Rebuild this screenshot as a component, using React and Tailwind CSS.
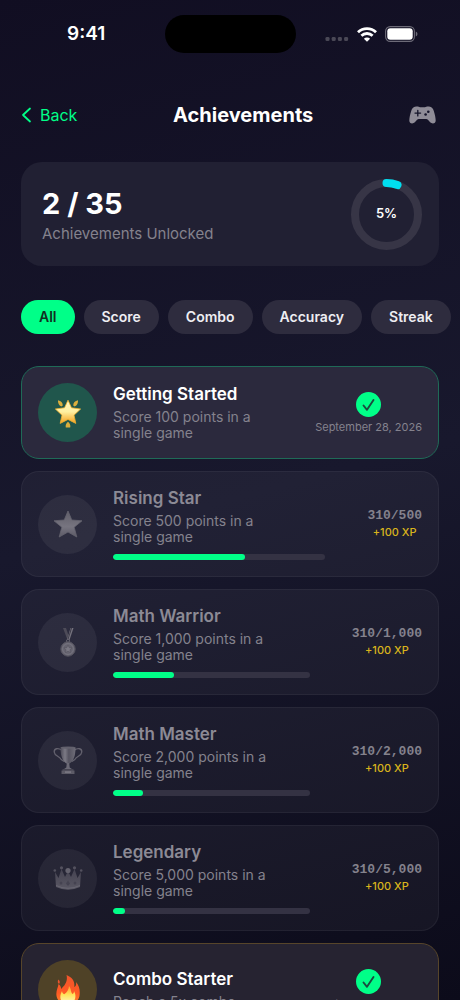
import { useState } from 'react'

const FILTERS = ['All', 'Score', 'Combo', 'Accuracy', 'Streak']

const ACHIEVEMENTS = [
  { id: 1, category: 'Score', title: 'Getting Started', text: 'Score 100 points in a single game', icon: GlowingStar, tone: 'green', date: 'September 28, 2026' },
  { id: 2, category: 'Score', title: 'Rising Star', text: 'Score 500 points in a single game', icon: PlainStar, current: 310, goal: 500 },
  { id: 3, category: 'Score', title: 'Math Warrior', text: 'Score 1,000 points in a single game', icon: Medal, current: 310, goal: 1000 },
  { id: 4, category: 'Score', title: 'Math Master', text: 'Score 2,000 points in a single game', icon: Trophy, current: 310, goal: 2000 },
  { id: 5, category: 'Score', title: 'Legendary', text: 'Score 5,000 points in a single game', icon: Crown, current: 310, goal: 5000 },
  { id: 6, category: 'Combo', title: 'Combo Starter', text: 'Reach a 5x combo', icon: Flame, tone: 'gold', date: 'September 28, 2026' },
]

const CARD_TONES = {
  green: 'border-[#1f6a57] bg-[#2b293d]',
  gold: 'border-[#57452a] bg-[#262331]',
}

const ICON_TONES = {
  green: 'bg-[#20564c]',
  gold: 'bg-[#4f4227]',
}

function GlowingStar() {
  return (
    <svg width="28" height="30" viewBox="0 0 28 30" aria-hidden="true">
      <defs>
        <linearGradient id="glow" x1="0" y1="0" x2="0" y2="1">
          <stop offset="0" stopColor="#fff6c4" />
          <stop offset="0.5" stopColor="#fff0a0" />
          <stop offset="1" stopColor="#f5a01c" />
        </linearGradient>
      </defs>
      <path d="M14 2.2 17.5 9.8 26.6 11 20 17.2 21.8 25.4 14 21.4 6.2 25.4 8 17.2 1.4 11 10.5 9.8Z" fill="url(#glow)" stroke="#f0b030" strokeWidth="0.8" strokeLinejoin="round" />
      <path d="M4 2.2Q8.6 3 8.8 7.4L7.3 8.6Q3.6 6.6 4 2.2ZM24 2.2Q19.4 3 19.2 7.4L20.7 8.6Q24.4 6.6 24 2.2ZM14 23.8Q17 26.4 16.2 29.4H11.8Q11 26.4 14 23.8Z" fill="#dcae3c" />
    </svg>
  )
}

function PlainStar() {
  return (
    <svg width="30" height="28" viewBox="0 0 30 28" aria-hidden="true">
      <defs>
        <linearGradient id="star" x1="0" y1="0" x2="0" y2="1">
          <stop offset="0" stopColor="#5f5d68" />
          <stop offset="0.6" stopColor="#777580" />
          <stop offset="1" stopColor="#5c5a66" />
        </linearGradient>
      </defs>
      <path d="M15 1 18.8 10 29 10.8 21.2 17.2 23.8 27 15 22 6.2 27 8.8 17.2 1 10.8 11.2 10Z" fill="url(#star)" stroke="#65636f" strokeWidth="0.8" strokeLinejoin="round" />
    </svg>
  )
}

function Medal() {
  return (
    <svg width="18" height="30" viewBox="0 0 18 30" aria-hidden="true">
      <path d="M4 1H7L10.5 11 8.5 13Z" fill="#4d4b58" />
      <path d="M11.5 1H14.5L10.5 13H8Z" fill="#75737e" />
      <path d="M12 1h1L9.5 12H8.7Z" fill="#3a3846" />
      <circle cx="9" cy="14" r="1.6" fill="none" stroke="#62606c" />
      <circle cx="9" cy="22" r="7.2" fill="#666470" stroke="#55535f" />
      <circle cx="9" cy="22" r="5.4" fill="none" stroke="#7d7b86" strokeWidth="0.7" />
      <path d="m9 18 1.2 2.7 2.9.2-2.2 1.9.7 2.9L9 24.1l-2.6 1.6.7-2.9-2.2-1.9 2.9-.2Z" fill="#7b7984" stroke="#53515d" strokeWidth="0.5" />
    </svg>
  )
}

function Trophy() {
  return (
    <svg width="30" height="30" viewBox="0 0 30 30" aria-hidden="true">
      <defs>
        <linearGradient id="cup" x1="0" y1="0" x2="1" y2="0">
          <stop offset="0" stopColor="#4d4b58" />
          <stop offset="0.3" stopColor="#7c7a85" />
          <stop offset="0.55" stopColor="#555360" />
          <stop offset="1" stopColor="#6f6d78" />
        </linearGradient>
      </defs>
      <path d="M8.5 5C5 2.5 1 3.5 1.2 7c.3 4 5 4 7 7.5l3 2M21.5 5C25 2.5 29 3.5 28.8 7c-.3 4-5 4-7 7.5l-3 2" fill="none" stroke="#64626e" strokeWidth="1.3" />
      <path d="M7.5 2.5h15C22.5 11 20.5 16 16.5 18.5h-3C9.5 16 7.5 11 7.5 2.5Z" fill="url(#cup)" />
      <ellipse cx="15" cy="2.6" rx="7.5" ry="1.2" fill="#63616d" />
      <path d="M13.8 18h2.4l.5 4.5 2.3 1.5H11l2.3-1.5Z" fill="#6b6975" />
      <path d="M9.5 24h11v2h-11Z" fill="#474552" />
      <path d="M8.5 25.5h13V29h-13Z" fill="#5d5b67" />
      <path d="M12 26.3h6v1.6h-6Z" fill="#7b7984" />
    </svg>
  )
}

function Crown() {
  return (
    <svg width="30" height="26" viewBox="0 0 30 26" aria-hidden="true">
      <defs>
        <linearGradient id="crown" x1="0" y1="0" x2="0" y2="1">
          <stop offset="0" stopColor="#454351" />
          <stop offset="1" stopColor="#5a5864" />
        </linearGradient>
      </defs>
      <path d="M2 7 5.5 13 8.5 4 12 12 15 6 18 12 21.5 4 24.5 13 28 7 27 22Q15 27.5 3 22Z" fill="url(#crown)" />
      <path d="M3 20.5Q15 26 27 20.5" fill="none" stroke="#686672" strokeWidth="1" />
      <circle cx="1.8" cy="5.5" r="1.3" fill="#53515e" />
      <circle cx="8.5" cy="2.8" r="1.6" fill="#53515e" />
      <circle cx="15" cy="5.5" r="2.6" fill="#64626e" />
      <circle cx="21.5" cy="2.8" r="1.6" fill="#53515e" />
      <circle cx="28.2" cy="5.5" r="1.3" fill="#53515e" />
      <path d="M15 15.5 17 18.5 15 21 13 18.5Z" fill="#454351" />
      <ellipse cx="8" cy="18" rx="1.4" ry="1.6" fill="#454351" />
      <ellipse cx="22" cy="18" rx="1.4" ry="1.6" fill="#454351" />
    </svg>
  )
}

function Flame() {
  return (
    <svg width="26" height="30" viewBox="0 0 26 30" aria-hidden="true">
      <defs>
        <linearGradient id="flame" x1="0" y1="0" x2="0" y2="1">
          <stop offset="0" stopColor="#f0552c" />
          <stop offset="0.6" stopColor="#ff5a24" />
          <stop offset="1" stopColor="#ff8a2a" />
        </linearGradient>
        <linearGradient id="core" x1="0" y1="0" x2="0" y2="1">
          <stop offset="0" stopColor="#ff9a2e" />
          <stop offset="0.5" stopColor="#ffe45c" />
          <stop offset="1" stopColor="#fff6bd" />
        </linearGradient>
      </defs>
      <path d="M11.5 0C18 2.5 20 7 19.2 12 21 11.5 21.5 9 21 7c3 3.5 4.2 8 3.6 13C24 26 19 29.5 13 29.5S2 26 1.4 20C1 15.5 3 13 3.5 9c1.8 1.2 2.6 3 2.6 5C10 10.5 13 6 11.5 0Z" fill="url(#flame)" />
      <path d="M3.5 4.5C5 6 5.2 7.5 4 9 2.5 8 2.4 6 3.5 4.5Z" fill="#f0552c" />
      <path d="M14 11c2.5 3 1.5 6 3.5 8 1-.5 1.5-1.5 1.5-3 3 5 1.5 12.5-6 12.5S3.5 22.5 7 16c.3 1.8 1 2.8 2.2 3.2C12 17.5 13.8 14.5 14 11Z" fill="url(#core)" />
    </svg>
  )
}

function StatusBar() {
  return (
    <div className="grid grid-cols-[minmax(0,1fr)_131px_minmax(0,1fr)] items-center pt-[15px]">
      <div className="pl-2 text-center text-[19px] leading-6 font-semibold">9:41</div>
      <div className="h-[38px] rounded-full bg-black" />
      <div className="flex items-center justify-end gap-2 pr-[42px]">
        <svg width="24" height="16" viewBox="0 0 24 16" fill="#4a4856" aria-hidden="true">
          <rect x="0.5" y="11" width="4" height="4" rx="1.3" />
          <rect x="6.7" y="11" width="4" height="4" rx="1.3" />
          <rect x="12.9" y="11" width="4" height="4" rx="1.3" />
          <rect x="19.1" y="11" width="4" height="4" rx="1.3" />
        </svg>
        <svg width="20" height="15" viewBox="0 0 20 15" fill="none" stroke="#fff" strokeWidth="2.8" aria-hidden="true">
          <path d="M1 5.3a12.8 12.8 0 0 1 18 0" />
          <path d="M4.4 8.8a8 8 0 0 1 11.2 0" />
          <path d="M10 14.8 6.9 11.7a4.4 4.4 0 0 1 6.2 0Z" fill="#fff" stroke="none" />
        </svg>
        <svg width="33" height="16" viewBox="0 0 33 16" aria-hidden="true">
          <rect x="0.6" y="0.6" width="28.8" height="14.8" rx="4.6" fill="none" stroke="#6d6b78" strokeWidth="1.1" />
          <rect x="2.3" y="2.3" width="25.4" height="11.4" rx="3" fill="#fff" />
          <path d="M30.8 5.5Q32.5 6.3 32.5 8T30.8 10.5Z" fill="#6d6b78" />
        </svg>
      </div>
    </div>
  )
}

function Header() {
  return (
    <header className="mt-12 flex h-7 items-center justify-between pr-6 pl-[21px]">
      <button className="flex items-center gap-2 text-base text-[#00ff88]">
        <svg width="11" height="16" viewBox="0 0 11 16" fill="none" stroke="currentColor" strokeWidth="1.8" strokeLinecap="round" strokeLinejoin="round" aria-hidden="true">
          <path d="M9 1.5 2 8l7 6.5" />
        </svg>
        Back
      </button>
      <h1 className="text-xl font-bold">Achievements</h1>
      <button aria-label="Game Center">
        <svg width="27" height="18" viewBox="0 0 27 18" aria-hidden="true">
          <path d="M7 .6C9 .2 10 1.2 11 1.2h5C17 1.2 18 .2 20 .6c3 .5 4 1.9 4.8 4.4 1 3.3 1.8 6.5 1.9 9.5 0 1.8-1.2 3-2.8 3-2.3 0-3.4-2-5-3.7-.5-.6-1-.8-1.7-.8H9.8c-.7 0-1.2.2-1.7.8-1.6 1.7-2.7 3.7-5 3.7-1.6 0-2.8-1.2-2.8-3C.4 11.5 1.2 8.3 2.2 5 3 2.5 4 1.1 7 .6Z" fill="#8f8c97" />
          <path d="M8.8 4.3v5.6M6 7.1h5.6" stroke="#15142a" strokeWidth="1.3" strokeLinecap="round" />
          <circle cx="16.6" cy="8.5" r="1.3" fill="#15142a" />
          <circle cx="19.3" cy="5.8" r="1.3" fill="#15142a" />
        </svg>
      </button>
    </header>
  )
}

function Summary() {
  return (
    <section className="mx-[21px] mt-[33px] flex h-[104px] items-center justify-between rounded-[21px] bg-[#212033] pr-[17px] pl-[21px]">
      <div className="pt-1">
        <p className="text-[29px] leading-9 font-bold">2 / 35</p>
        <p className="text-[15px] leading-6 text-[#84828d]">Achievements Unlocked</p>
      </div>
      <div className="relative">
        <svg width="71" height="71" viewBox="0 0 71 71" fill="none" strokeWidth="8" aria-hidden="true">
          <circle cx="35.5" cy="35.5" r="31.5" stroke="#373546" />
          <path d="M35.5 4A31.5 31.5 0 0 1 46.5 6" stroke="#00dff0" strokeLinecap="round" />
        </svg>
        <span className="absolute inset-0 flex items-center justify-center text-[13px] font-semibold">5%</span>
      </div>
    </section>
  )
}

function AchievementCard({ item }) {
  const Icon = item.icon
  const unlocked = Boolean(item.date)

  return (
    <li className={`flex items-center rounded-[18px] border p-4 ${unlocked ? CARD_TONES[item.tone] : 'border-white/5 bg-white/4'}`}>
      <div className={`mr-4 flex size-[59px] shrink-0 items-center justify-center rounded-full ${unlocked ? ICON_TONES[item.tone] : 'bg-white/6'}`}>
        <Icon />
      </div>
      <div className="mr-[42px] min-w-0 flex-1">
        <h2 className={`text-[17px] leading-5 font-semibold whitespace-nowrap ${unlocked ? 'text-white' : 'text-[#8c8a95]'}`}>{item.title}</h2>
        <p className="mt-[5px] max-w-40 text-sm leading-4 text-[#84828d]">{item.text}</p>
        {!unlocked && (
          <div className="mt-[9px] h-1.5 overflow-hidden rounded-full bg-[#343243]">
            <div className="h-full rounded-full bg-[#00ff88]" style={{ width: `${(item.current / item.goal) * 100}%` }} />
          </div>
        )}
      </div>
      {unlocked ? (
        <div className="flex shrink-0 flex-col items-center gap-1">
          <svg width="25" height="25" viewBox="0 0 25 25" aria-label="Unlocked">
            <circle cx="12.5" cy="12.5" r="12.5" fill="#00ff88" />
            <path d="M7.5 13.5 11 17.8 17.5 8" fill="none" stroke="#1b4a3f" strokeWidth="1.9" strokeLinecap="round" strokeLinejoin="round" />
          </svg>
          <span className="text-[11px] leading-3 text-[#84828d]">{item.date}</span>
        </div>
      ) : (
        <div className="flex shrink-0 flex-col items-center">
          <span className="font-['Liberation_Mono',monospace] text-[13px] leading-4 font-bold text-[#84828d]">
            {item.current}/{item.goal.toLocaleString('en-US')}
          </span>
          <span className="text-[11px] leading-4 font-medium text-[#d9b41c]">+100 XP</span>
        </div>
      )}
    </li>
  )
}

export default function App() {
  const [filter, setFilter] = useState('All')
  const items = ACHIEVEMENTS.filter((a) => filter === 'All' || a.category === filter)

  return (
    <div className="flex h-screen flex-col overflow-hidden bg-linear-165 from-[#110e22] via-[#18182d] to-[#0c0b1a] font-['Inter',sans-serif] text-white">
      <StatusBar />
      <Header />
      <Summary />

      {/* Category filters */}
      <nav className="mt-[34px] flex shrink-0 gap-[9px] overflow-hidden px-[21px]">
        {FILTERS.map((name) => (
          <button
            key={name}
            onClick={() => setFilter(name)}
            className={`h-[34px] shrink-0 rounded-full px-[18px] text-sm font-semibold ${filter === name ? 'bg-[#00ff88] text-[#11301f]' : 'bg-[#2e2c3e] text-[#eeeef2]'}`}
          >
            {name}
          </button>
        ))}
      </nav>

      {/* Achievement list */}
      <ul className="mt-8 flex min-h-0 flex-1 flex-col gap-3 overflow-hidden px-[21px] *:shrink-0">
        {items.map((item) => (
          <AchievementCard key={item.id} item={item} />
        ))}
      </ul>
    </div>
  )
}
